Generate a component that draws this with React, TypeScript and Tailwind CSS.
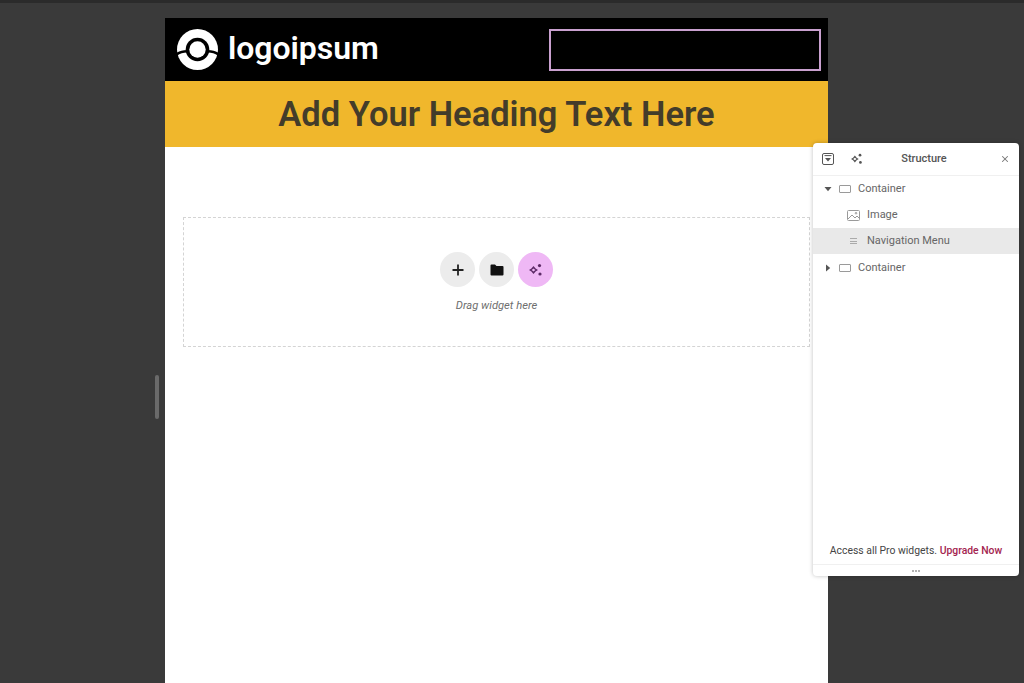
import { X } from "lucide-react"

function Sparkles({ color = "#333", size = 14 }: { color?: string; size?: number }) {
  return (
    <svg width={size} height={size} viewBox="0 0 14 14" fill={color}>
      <path d="M4.5 3 L6.6 5.4 L9 7 L6.6 8.6 L4.5 11 L2.4 8.6 L0 7 L2.4 5.4 Z M4.5 5.4 L3.6 6.2 L2.6 7 L3.6 7.8 L4.5 8.6 L5.4 7.8 L6.4 7 L5.4 6.2 Z" fillRule="evenodd" />
      <circle cx="10.5" cy="2.6" r="1.6" />
      <circle cx="11" cy="11" r="1.6" />
    </svg>
  )
}

function BoxIcon() {
  return <div className="w-[12px] h-[8px] border border-[#9a9a9a] rounded-[1px]" />
}

function Caret({ open }: { open: boolean }) {
  return (
    <svg width="8" height="8" viewBox="0 0 8 8" fill="#555">
      {open ? <path d="M0.5 2 H7.5 L4 6.2 Z" /> : <path d="M2 0.5 V7.5 L6.2 4 Z" />}
    </svg>
  )
}

function Logo() {
  return (
    <svg width="41" height="41" viewBox="0 0 40 40">
      <circle cx="20" cy="20" r="20" fill="#fff" />
      <circle cx="20" cy="20" r="11.5" fill="#000" />
      <circle cx="20" cy="20" r="8" fill="#fff" />
      <path d="M-1 23.5 C2 21.5 5 21 10 20.5 L10 23 C6 23.2 3 24 0 26 Z M41 23.5 C38 21.5 35 21 30 20.5 L30 23 C34 23.2 37 24 40 26 Z" fill="#000" />
    </svg>
  )
}

function StructurePanel() {
  return (
    <div className="absolute left-[813px] top-[143px] w-[206px] h-[433px] bg-white rounded-[4px] flex flex-col text-[#666] text-[11px] shadow-[0_0_4px_rgba(0,0,0,0.25)]">
      <div className="h-[33px] flex items-center border-b border-[#f0f0f0] pl-[9px] pr-[9px] relative">
        <svg width="12" height="12" viewBox="0 0 12 12" fill="none">
          <rect x="0.5" y="0.5" width="11" height="11" rx="1.5" stroke="#555" />
          <path d="M3 5 H9 L6 8.5 Z" fill="#555" />
          <path d="M2.5 2.6 H9.5" stroke="#555" />
        </svg>
        <div className="ml-[17px]">
          <Sparkles size={12} color="#555" />
        </div>
        <span className="flex-1 text-center text-[#555] font-medium pr-[15px]">Structure</span>
        <X size={10} strokeWidth={2.5} color="#777" />
      </div>
      <div className="flex-1 flex flex-col">
        <div className="h-[26px] flex items-center pl-[11px] gap-[7px]">
          <Caret open />
          <BoxIcon />
          <span>Container</span>
        </div>
        <div className="h-[26px] flex items-center pl-[34px] gap-[7px]">
          <svg width="13" height="11" viewBox="0 0 13 11" fill="none" stroke="#9a9a9a" strokeWidth="1">
            <rect x="0.5" y="0.5" width="12" height="10" rx="1" />
            <path d="M1 9 L5 5 L8 8 L10 6 L12 8" />
            <circle cx="9" cy="3.2" r="0.8" />
          </svg>
          <span>Image</span>
        </div>
        <div className="h-[26px] flex items-center pl-[37px] gap-[10px] bg-[#e9e9e9]">
          <div className="w-[7px] h-[6px] flex flex-col justify-between">
            <div className="h-px bg-[#aaa]" />
            <div className="h-px bg-[#aaa]" />
            <div className="h-px bg-[#aaa]" />
          </div>
          <span>Navigation Menu</span>
        </div>
        <div className="h-[26px] flex items-center pl-[11px] gap-[7px] mt-px">
          <Caret open={false} />
          <BoxIcon />
          <span>Container</span>
        </div>
      </div>
      <div className="h-[34px] flex items-center justify-center text-[10.4px] text-[#444] pt-[8px]">
        <span>
          Access all Pro widgets. <span className="text-[#a3244f] font-medium">Upgrade Now</span>
        </span>
      </div>
      <div className="h-[12px] border-t border-[#f0f0f0] flex items-center justify-center gap-[1px]">
        <div className="w-[2px] h-[2px] rounded-full bg-[#999]" />
        <div className="w-[2px] h-[2px] rounded-full bg-[#999]" />
        <div className="w-[2px] h-[2px] rounded-full bg-[#999]" />
      </div>
    </div>
  )
}

export default function App() {
  return (
    <div className="relative w-[1024px] h-[683px] overflow-hidden bg-[#3a3a3a] font-['Roboto',sans-serif]">
      <div className="h-[3px] bg-[#2b2b2b]" />
      <div className="w-[663px] ml-[165px] mt-[15px] h-[665px] bg-white flex flex-col">
        <header className="h-[63px] bg-black flex items-center justify-between pl-[12px] pr-[7px]">
          <div className="flex items-center gap-[10px]">
            <Logo />
            <span className="text-white text-[32px] font-semibold tracking-[-0.05px] leading-none pb-[3px]">logoipsum</span>
          </div>
          <div className="w-[272px] h-[42px] border-2 border-[#c9a0cf]" />
        </header>
        <div className="h-[66px] bg-[#f0b72c] flex items-center justify-center">
          <h1 className="text-[34.5px] font-semibold text-[#433c2a] leading-none">Add Your Heading Text Here</h1>
        </div>
        <div className="flex-1 pt-[70px] pl-[18px] pr-[18px]">
          <div className="h-[130px] border border-dashed border-[#d4d4d4] flex flex-col items-center pt-[34px]">
            <div className="flex gap-[4px]">
              <div className="w-[35px] h-[35px] rounded-full bg-[#ececec] flex items-center justify-center">
                <svg width="12" height="12" viewBox="0 0 12 12" stroke="#222" strokeWidth="1.8">
                  <path d="M6 0.5 V11.5 M0.5 6 H11.5" />
                </svg>
              </div>
              <div className="w-[35px] h-[35px] rounded-full bg-[#ececec] flex items-center justify-center">
                <svg width="14" height="12" viewBox="0 0 14 12" fill="#111">
                  <path d="M0.5 1.5 Q0.5 0.5 1.5 0.5 H5 L6.5 2 H12.5 Q13.5 2 13.5 3 V10.5 Q13.5 11.5 12.5 11.5 H1.5 Q0.5 11.5 0.5 10.5 Z" />
                </svg>
              </div>
              <div className="w-[35px] h-[35px] rounded-full bg-[#efb8f5] flex items-center justify-center">
                <Sparkles size={14} color="#5c2a66" />
              </div>
            </div>
            <p className="mt-[13px] text-[11.2px] italic text-[#6e6e6e] leading-none">Drag widget here</p>
          </div>
        </div>
      </div>
      <div className="absolute left-[155px] top-[375px] w-[4px] h-[44px] rounded-full bg-[#6a6a6a]" />
      <StructurePanel />
    </div>
  )
}
